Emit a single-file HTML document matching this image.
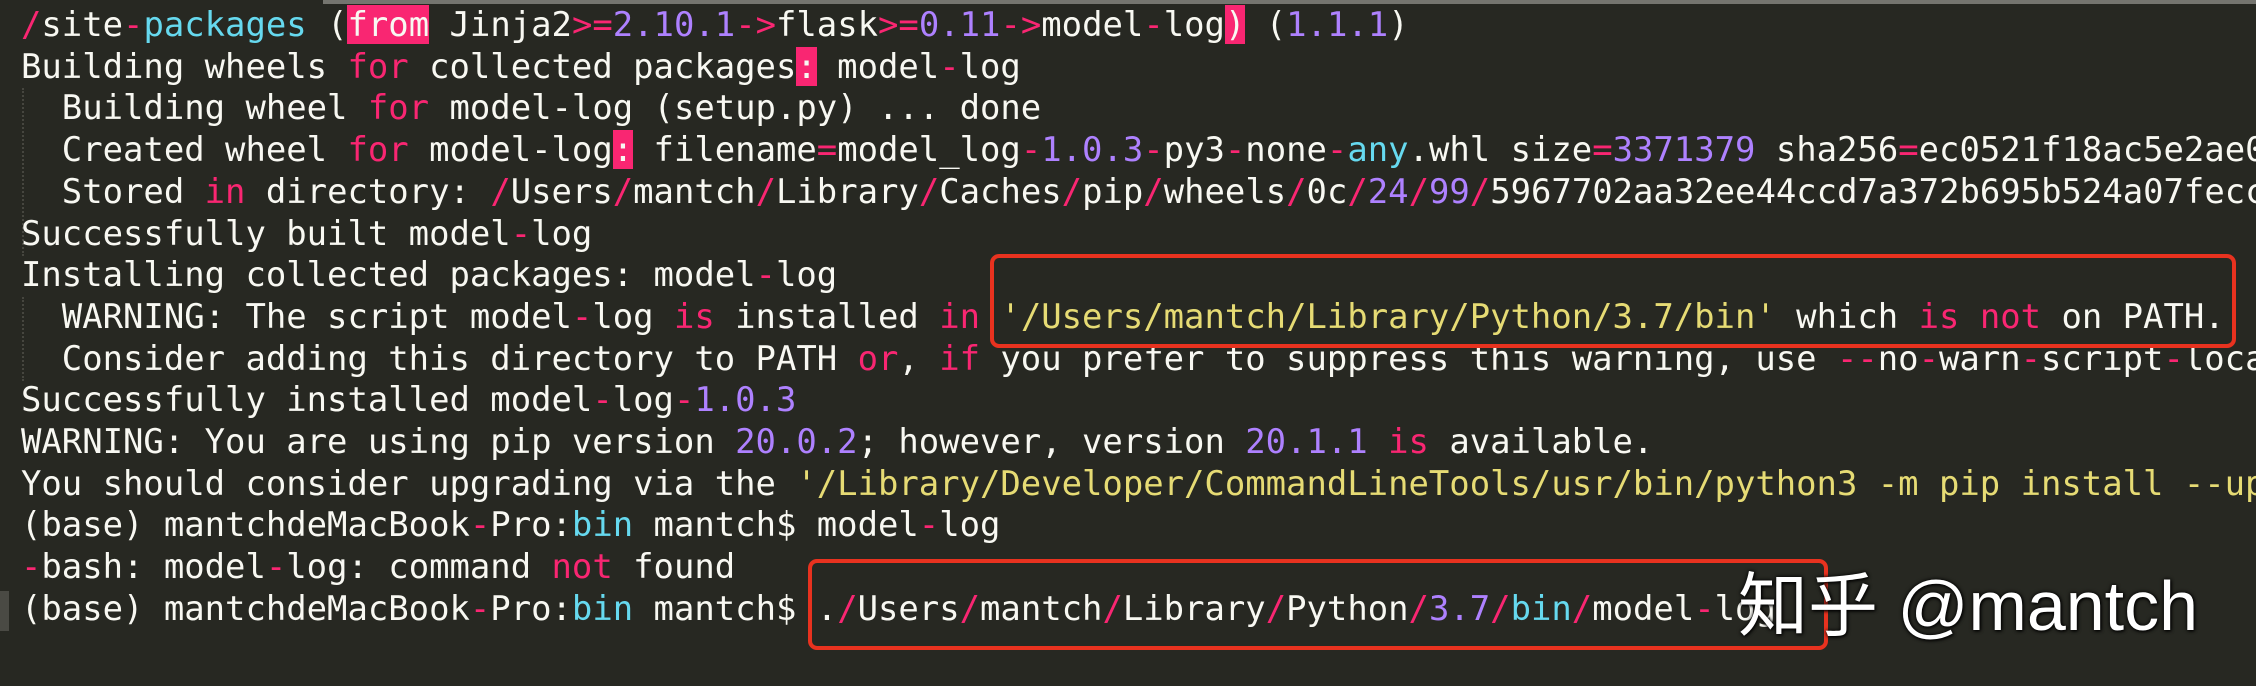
<!DOCTYPE html>
<html><head><meta charset="utf-8"><style>
html,body{margin:0;padding:0;}
body{width:2256px;height:686px;background:#272822;position:relative;overflow:hidden;}
.top{position:absolute;left:323px;top:0;width:1933px;height:4px;background:#75756f;}
.t{position:absolute;left:21px;top:4px;width:2235px;height:682px;overflow:hidden;font-family:"DejaVu Sans Mono","Liberation Mono",monospace;font-size:33.9px;line-height:41.7px;color:#f8f8f2;white-space:pre;}
.p{color:#f92672}.v{color:#ae81ff}.y{color:#e6db74}.c{color:#66d9ef}
.h{background:#f92672;color:#f8f8f2}
.box{position:absolute;border:4px solid #e8321f;border-radius:9px;}
.wm{position:absolute;left:1738px;top:550px;font-family:"Liberation Sans","Noto Sans CJK SC",sans-serif;font-size:70px;color:#fff;text-shadow:0 0 4px #000,1px 1px 3px #000;white-space:pre;}
.cur{position:absolute;left:0;top:591px;width:9px;height:40px;background:#4a4a44;}
.g{position:absolute;left:22px;width:0;border-left:2px dotted #46463f;}
</style></head><body>
<div class="top"></div>
<div class="cur"></div>
<div class="g" style="top:88px;height:168px"></div>
<div class="g" style="top:297px;height:84px"></div>
<div class="t"><span class="p">/</span>site<span class="p">-</span><span class="c">packages</span> (<span class="h">from</span> Jinja2<span class="p">&gt;=</span><span class="v">2.10.1</span><span class="p">-&gt;</span>flask<span class="p">&gt;=</span><span class="v">0.11</span><span class="p">-&gt;</span>model<span class="p">-</span>log<span class="h">)</span> (<span class="v">1.1.1</span>)
Building wheels <span class="p">for</span> collected packages<span class="h">:</span> model<span class="p">-</span>log
  Building wheel <span class="p">for</span> model-log (setup.py) ... done
  Created wheel <span class="p">for</span> model-log<span class="h">:</span> filename<span class="p">=</span>model_log<span class="p">-</span><span class="v">1.0.3</span><span class="p">-</span>py3<span class="p">-</span>none<span class="p">-</span><span class="c">any</span>.whl size<span class="p">=</span><span class="v">3371379</span> sha256<span class="p">=</span>ec0521f18ac5e2ae0c1
  Stored <span class="p">in</span> directory: <span class="p">/</span>Users<span class="p">/</span>mantch<span class="p">/</span>Library<span class="p">/</span>Caches<span class="p">/</span>pip<span class="p">/</span>wheels<span class="p">/</span>0c<span class="p">/</span><span class="v">24</span><span class="p">/</span><span class="v">99</span><span class="p">/</span>5967702aa32ee44ccd7a372b695b524a07fecc1
Successfully built model<span class="p">-</span>log
Installing collected packages: model<span class="p">-</span>log
  WARNING: The script model<span class="p">-</span>log <span class="p">is</span> installed <span class="p">in</span> <span class="y">'/Users/mantch/Library/Python/3.7/bin'</span> which <span class="p">is not</span> on PATH.
  Consider adding this directory to PATH <span class="p">or</span>, <span class="p">if</span> you prefer to suppress this warning, use <span class="p">--</span>no<span class="p">-</span>warn<span class="p">-</span>script<span class="p">-</span>location.
Successfully installed model<span class="p">-</span>log<span class="p">-</span><span class="v">1.0.3</span>
WARNING: You are using pip version <span class="v">20.0.2</span>; however, version <span class="v">20.1.1</span> <span class="p">is</span> available.
You should consider upgrading via the <span class="y">'/Library/Developer/CommandLineTools/usr/bin/python3 -m pip install --upgrade pip'</span>
(base) mantchdeMacBook<span class="p">-</span>Pro:<span class="c">bin</span> mantch$ model<span class="p">-</span>log
<span class="p">-</span>bash: model<span class="p">-</span>log: command <span class="p">not</span> found
(base) mantchdeMacBook<span class="p">-</span>Pro:<span class="c">bin</span> mantch$ .<span class="p">/</span>Users<span class="p">/</span>mantch<span class="p">/</span>Library<span class="p">/</span>Python<span class="p">/</span><span class="v">3.7</span><span class="p">/</span><span class="c">bin</span><span class="p">/</span>model<span class="p">-</span>log</div>
<div class="box" style="left:990px;top:254px;width:1238px;height:86px"></div>
<div class="box" style="left:808px;top:559px;width:1012px;height:83px"></div>
<div class="wm">知乎 @mantch</div>
</body></html>
